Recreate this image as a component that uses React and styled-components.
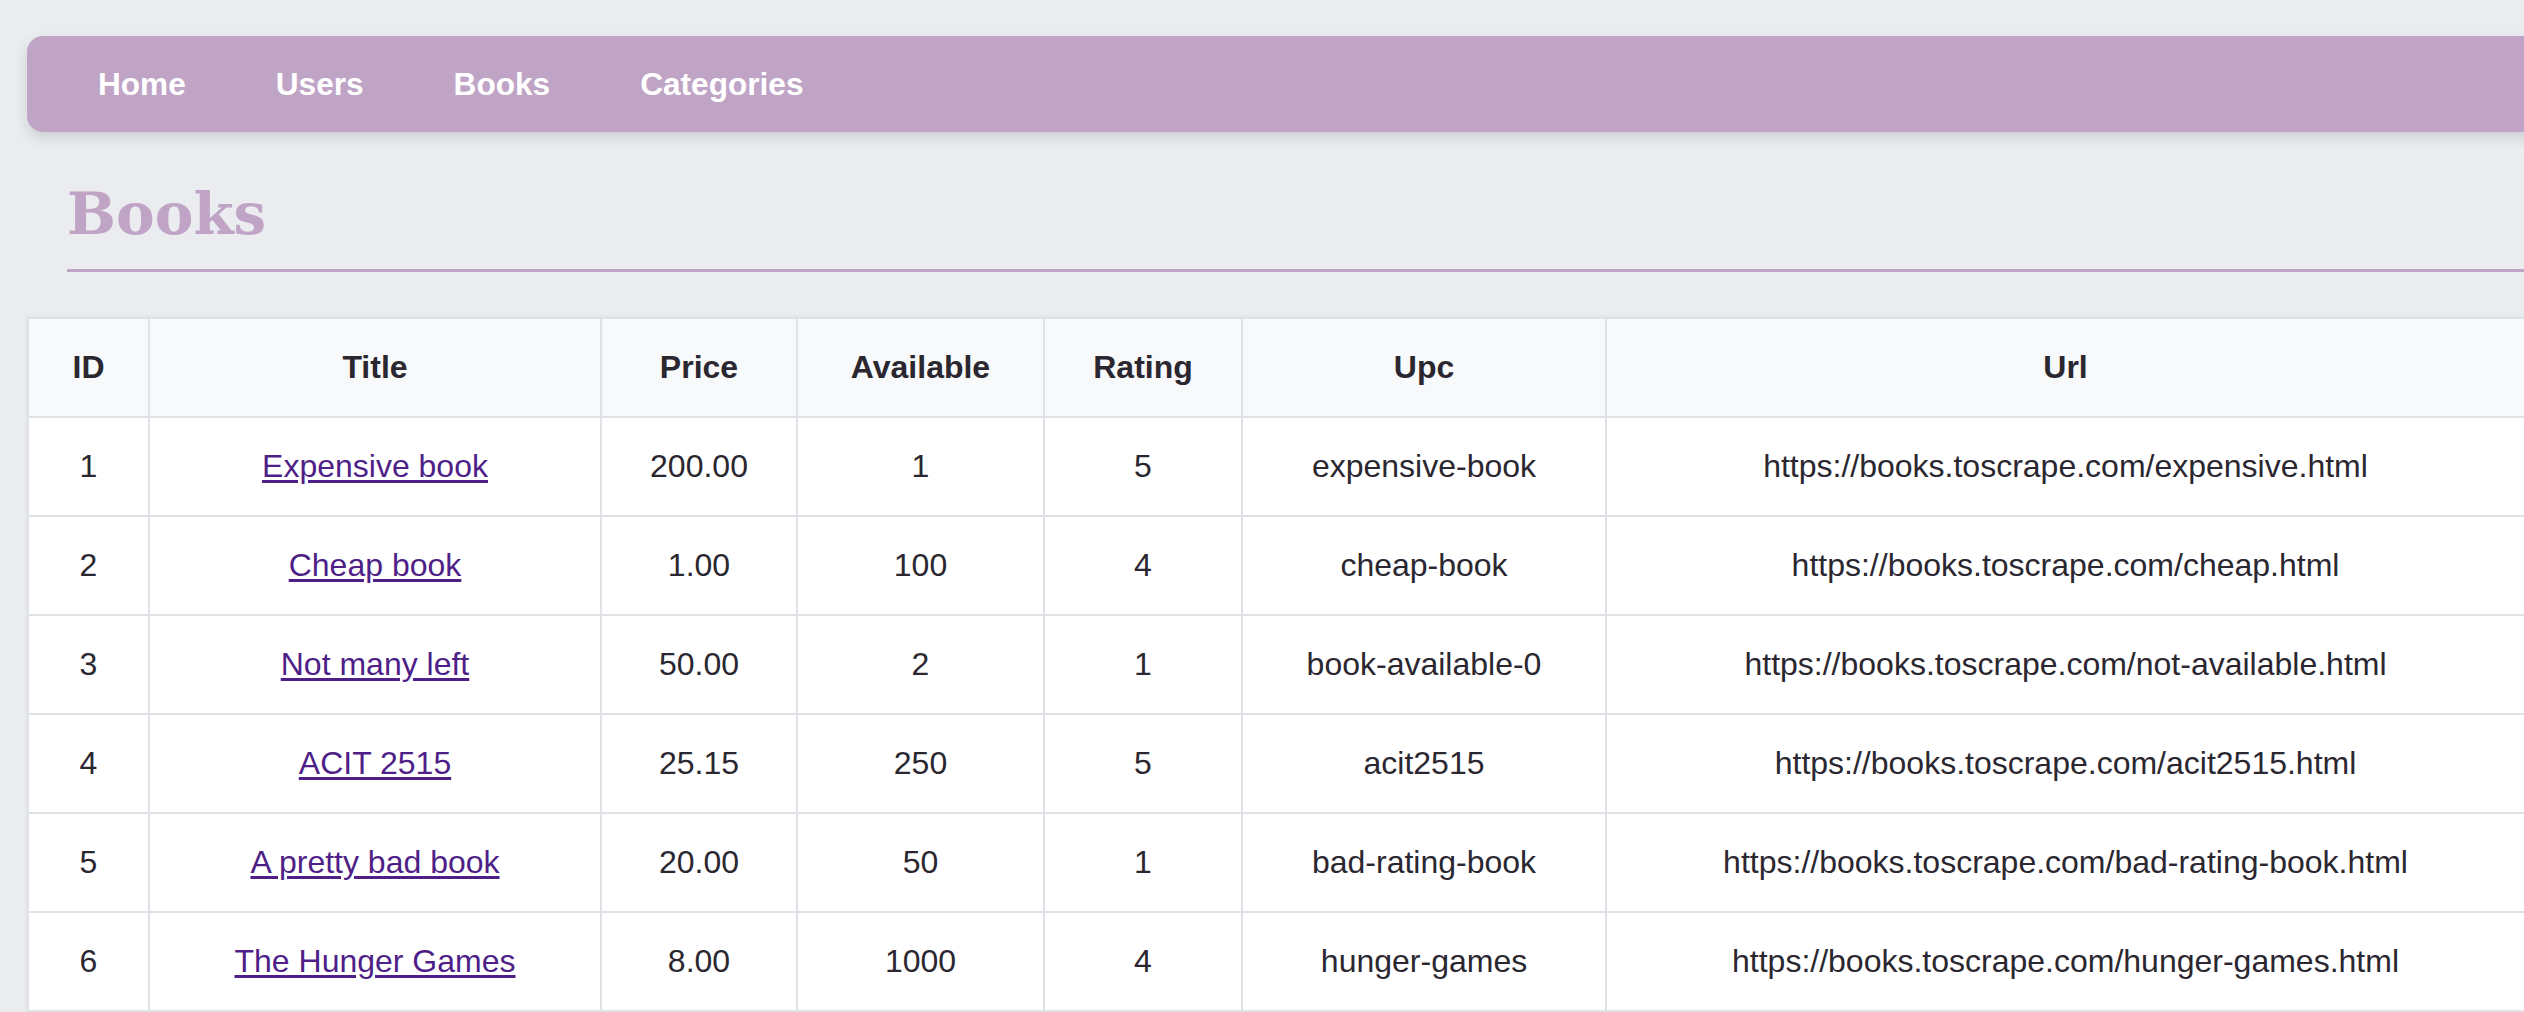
import styled, { createGlobalStyle } from "styled-components";

const GlobalStyle = createGlobalStyle`
  html, body {
    margin: 0;
    padding: 0;
    overflow: hidden;
    background: #ebecf0;
  }
  body {
    font-family: "Liberation Sans", Arial, sans-serif;
    color: #333;
  }
`;

const accent = "#bfa4c6";

const Page = styled.div`
  padding: 36px 0 0 27px;
`;

const Nav = styled.nav`
  display: flex;
  gap: 90px;
  padding: 30px 71px 29px;
  margin-right: -24px;
  background: ${accent};
  border-radius: 16px;
  box-shadow: 0 6px 14px rgba(0, 0, 0, 0.12);
`;

const NavLink = styled.a`
  color: #fff;
  font-size: 31.6px;
  line-height: 37px;
  font-weight: 700;
  text-decoration: none;
`;

const Header = styled.header`
  margin: 48px 0 45px 40px;
  padding-bottom: 21px;
  border-bottom: 3px solid ${accent};
`;

const Title = styled.h1`
  margin: 0;
  font-family: "DejaVu Serif", "Liberation Serif", serif;
  font-size: 58px;
  font-weight: 700;
  color: ${accent};
`;

const Table = styled.table`
  width: 100%;
  table-layout: fixed;
  border-collapse: collapse;
  background: #fff;
  font-size: 32px;
  line-height: 37px;
  box-shadow: 0 0 4px rgba(0, 0, 0, 0.06);
`;

const Col = styled.col`
  width: ${(p) => p.$w}px;
`;

const Th = styled.th`
  padding: 30px 12px;
  background: #f8f9fa;
  border: 2px solid #dee2e6;
  font-weight: 700;
  color: #2b2730;
  text-align: center;
`;

const Td = styled.td`
  padding: 30px 12px;
  border: 2px solid #dee2e6;
  color: #2b2730;
  text-align: center;
  white-space: nowrap;
`;

const BookLink = styled.a`
  color: #4f1f88;
  text-decoration: underline;
  text-underline-offset: 3px;
`;

const columns = [
  ["ID", 121],
  ["Title", 452],
  ["Price", 196],
  ["Available", 247],
  ["Rating", 198],
  ["Upc", 364],
  ["Url", 919],
];

const books = [
  [1, "Expensive book", "200.00", 1, 5, "expensive-book", "https://books.toscrape.com/expensive.html"],
  [2, "Cheap book", "1.00", 100, 4, "cheap-book", "https://books.toscrape.com/cheap.html"],
  [3, "Not many left", "50.00", 2, 1, "book-available-0", "https://books.toscrape.com/not-available.html"],
  [4, "ACIT 2515", "25.15", 250, 5, "acit2515", "https://books.toscrape.com/acit2515.html"],
  [5, "A pretty bad book", "20.00", 50, 1, "bad-rating-book", "https://books.toscrape.com/bad-rating-book.html"],
  [6, "The Hunger Games", "8.00", 1000, 4, "hunger-games", "https://books.toscrape.com/hunger-games.html"],
];

const App = () => {
  return (
    <>
      <GlobalStyle />
      <Page>
        <Nav>
          <NavLink href="#">Home</NavLink>
          <NavLink href="#">Users</NavLink>
          <NavLink href="#">Books</NavLink>
          <NavLink href="#">Categories</NavLink>
        </Nav>

        <Header>
          <Title>Books</Title>
        </Header>

        <Table>
          <colgroup>
            {columns.map(([name, w]) => (
              <Col key={name} $w={w} />
            ))}
          </colgroup>
          <thead>
            <tr>
              {columns.map(([name]) => (
                <Th key={name}>{name}</Th>
              ))}
            </tr>
          </thead>
          <tbody>
            {books.map(([id, title, price, available, rating, upc, url]) => (
              <tr key={id}>
                <Td>{id}</Td>
                <Td>
                  <BookLink href="#">{title}</BookLink>
                </Td>
                <Td>{price}</Td>
                <Td>{available}</Td>
                <Td>{rating}</Td>
                <Td>{upc}</Td>
                <Td>{url}</Td>
              </tr>
            ))}
          </tbody>
        </Table>
      </Page>
    </>
  );
};

export default App;
